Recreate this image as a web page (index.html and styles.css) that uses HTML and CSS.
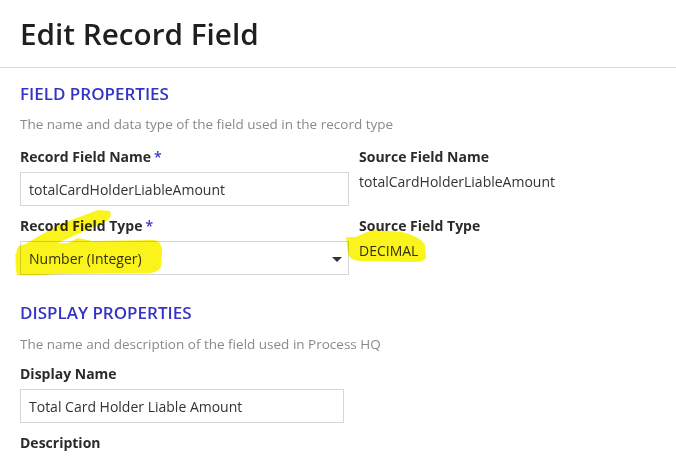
FILE: index.html
```html
<!DOCTYPE html>
<html lang="en">
  <head>
    <meta charset="UTF-8" />
    <meta name="viewport" content="width=device-width, initial-scale=1.0" />
    <title>Edit Record Field</title>
    <link rel="stylesheet" href="styles.css">
  </head>
  <body>
    <!-- Page title bar -->
    <header class="page-header">
      <h1>Edit Record Field</h1>
    </header>

    <main class="content">
      <!-- Field properties: name and type, next to the source field -->
      <section class="section">
        <h2 class="section-title">FIELD PROPERTIES</h2>
        <p class="section-desc">The name and data type of the field used in the record type</p>

        <div class="field-grid">
          <div class="field">
            <label for="fieldName">Record Field Name<span class="req">*</span></label>
            <input type="text" id="fieldName" class="text-input" value="totalCardHolderLiableAmount" />
          </div>
          <div class="field">
            <span class="field-label">Source Field Name</span>
            <span class="field-value">totalCardHolderLiableAmount</span>
          </div>

          <div class="field">
            <label for="fieldType">Record Field Type<span class="req">*</span></label>
            <div class="select-box" id="fieldType">
              <span>Number (Integer)</span>
              <span class="caret"></span>
            </div>
          </div>
          <div class="field">
            <span class="field-label">Source Field Type</span>
            <span class="field-value">DECIMAL</span>
          </div>
        </div>
      </section>

      <!-- Display properties -->
      <section class="section section-second">
        <h2 class="section-title">DISPLAY PROPERTIES</h2>
        <p class="section-desc">The name and description of the field used in Process HQ</p>

        <div class="field">
          <label for="displayName">Display Name</label>
          <input type="text" id="displayName" class="text-input short" value="Total Card Holder Liable Amount" />
        </div>
        <div class="field">
          <label for="description">Description</label>
        </div>
      </section>
    </main>

    <!-- Highlighter marks drawn over the form -->
    <svg class="marker" width="676" height="457" viewBox="0 0 676 457">
      <path d="M98 210 L110 211 Q113 217 105 222 L80 233 L58 243 L38 253 L20 264 L15 255 L27 243 L58 225 Z" />
      <path d="M17 249 Q18 244 30 244 L68 243 L78 238 L92 241 L154 240 Q162 241 162 251 L161 267 Q158 273 147 273 L60 274 Q30 276 17 275 Q14 263 17 249 Z" />
      <path d="M346 237 Q350 237 356 237 Q366 232 374 230 L402 232 Q420 236 425 245 L426 258 Q424 262 414 262 L360 261 Q349 260 348 253 Z" />
    </svg>
  </body>
</html>
```

FILE: styles.css
```css
/* Page base */
body {
  margin: 0;
  font-family: "Open Sans", "Liberation Sans", sans-serif;
  color: #333;
  background: #fff;
  position: relative;
}

/* Title bar with bottom divider */
.page-header {
  height: 68px;
  box-sizing: border-box;
  padding: 15px 20px 0;
  border-bottom: 1px solid #dcdcdc;
}

.page-header h1 {
  margin: 0;
  font-size: 29.7px;
  font-weight: 600;
  line-height: 38px;
  color: #1f1f1f;
}

.content {
  padding: 0 20px;
}

/* Section headings */
.section {
  padding-top: 14px;
}

.section-second {
  padding-top: 16px;
}

.section-title {
  margin: 0;
  font-size: 17px;
  font-weight: 600;
  line-height: 23px;
  color: #3434c6;
}

.section-desc {
  margin: 10px 0 13px;
  font-size: 13.5px;
  line-height: 19px;
  color: #8a8a8a;
}

.section-second .section-desc {
  margin: 11px 0 10px;
}

/* Two column grid for field and source */
.field-grid {
  display: grid;
  grid-template-columns: 329px 1fr;
  column-gap: 10px;
}

.field {
  display: flex;
  flex-direction: column;
  align-items: flex-start;
  margin-bottom: 10px;
}

label,
.field-label {
  display: block;
  font-size: 14px;
  font-weight: 700;
  line-height: 19px;
  color: #2b2b2b;
  margin-bottom: 6px;
}

.req {
  color: #3434c6;
  margin-left: 3px;
  font-weight: 600;
}

.field-value {
  font-size: 14px;
  line-height: 19px;
  color: #333;
}

/* Inputs */
.text-input,
.select-box {
  width: 329px;
  height: 34px;
  box-sizing: border-box;
  padding: 0 8px;
  border: 1px solid #d6d6d6;
  border-radius: 0;
  font-family: inherit;
  font-size: 14px;
  color: #333;
  background: #fff;
}

.text-input.short {
  width: 324px;
}

.select-box {
  display: flex;
  align-items: center;
  justify-content: space-between;
  padding-right: 6px;
}

/* Small down arrow of the dropdown */
.caret {
  width: 0;
  height: 0;
  border-left: 5px solid transparent;
  border-right: 5px solid transparent;
  border-top: 5px solid #333;
  margin-top: 2px;
}

/* Yellow highlighter marks */
.marker {
  position: absolute;
  left: 0;
  top: 0;
  pointer-events: none;
  mix-blend-mode: multiply;
}

.marker path {
  fill: #fbf31c;
}
```
